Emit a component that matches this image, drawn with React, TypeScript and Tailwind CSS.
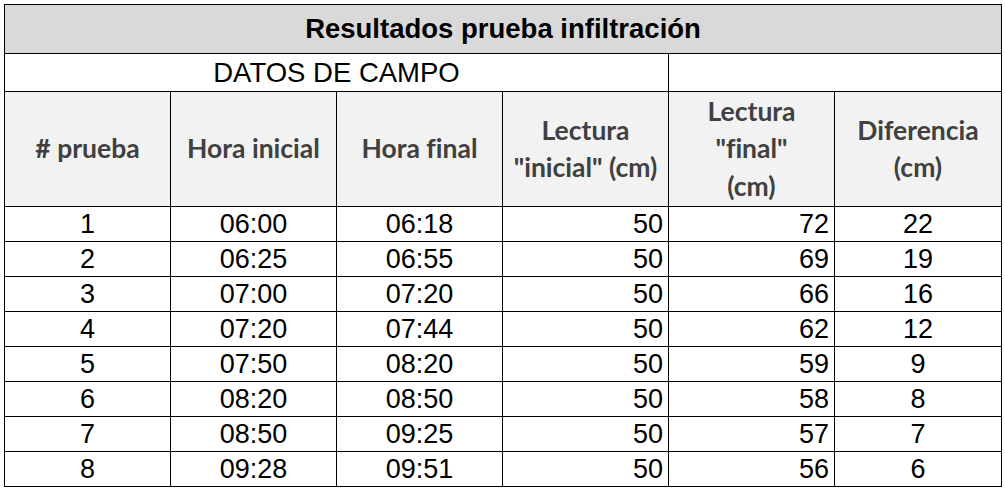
import React from "react";

const rows = [
    ["1", "06:00", "06:18", "50", "72", "22"],
    ["2", "06:25", "06:55", "50", "69", "19"],
    ["3", "07:00", "07:20", "50", "66", "16"],
    ["4", "07:20", "07:44", "50", "62", "12"],
    ["5", "07:50", "08:20", "50", "59", "9"],
    ["6", "08:20", "08:50", "50", "58", "8"],
    ["7", "08:50", "09:25", "50", "57", "7"],
    ["8", "09:28", "09:51", "50", "56", "6"],
];

const head = "border border-black bg-[#f2f2f2] font-['Lato',sans-serif] font-bold text-[#404040] text-[26.5px] leading-[37.5px] text-center align-middle p-0 [font-variant-ligatures:none]";
const cell = "border border-black p-0 align-middle";

const App = () => {
    return (
        <div className="w-[1005px] h-[492px] bg-white pt-[4px] pl-[4px] font-['Liberation_Sans',Arial,sans-serif] text-black">
            <table className="table-fixed border-collapse w-[997px]">
                <colgroup>
                    <col className="w-[166px]" />
                    <col className="w-[166px]" />
                    <col className="w-[166px]" />
                    <col className="w-[166px]" />
                    <col className="w-[166px]" />
                    <col className="w-[167px]" />
                </colgroup>
                <tbody>
                    <tr className="h-[49px]">
                        <td colSpan={6} className="border border-black bg-[#d9d9d9] text-center font-bold text-[27.5px] leading-[30px] p-0">
                            Resultados prueba infiltración
                        </td>
                    </tr>
                    <tr className="h-[38px]">
                        <td colSpan={4} className="border border-black text-center text-[27.5px] leading-[30px] p-0">
                            DATOS DE CAMPO
                        </td>
                        <td colSpan={2} className="border border-black p-0"></td>
                    </tr>
                    <tr className="h-[115px]">
                        <td className={head}># prueba</td>
                        <td className={head}>Hora inicial</td>
                        <td className={head}>Hora final</td>
                        <td className={head}>
                            Lectura
                            <br />
                            "inicial" (cm)
                        </td>
                        <td className={head}>
                            Lectura
                            <br />
                            "final"
                            <br />
                            (cm)
                        </td>
                        <td className={head}>
                            Diferencia
                            <br />
                            (cm)
                        </td>
                    </tr>
                    {rows.map((r) => (
                        <tr key={r[0]} className="h-[35px] text-[27px] leading-[30px]">
                            <td className={`${cell} text-center`}>{r[0]}</td>
                            <td className={`${cell} text-center`}>{r[1]}</td>
                            <td className={`${cell} text-center`}>{r[2]}</td>
                            <td className={`${cell} text-right pr-[5px]`}>{r[3]}</td>
                            <td className={`${cell} text-right pr-[5px]`}>{r[4]}</td>
                            <td className={`${cell} text-center`}>{r[5]}</td>
                        </tr>
                    ))}
                </tbody>
            </table>
        </div>
    );
};

export default App;
